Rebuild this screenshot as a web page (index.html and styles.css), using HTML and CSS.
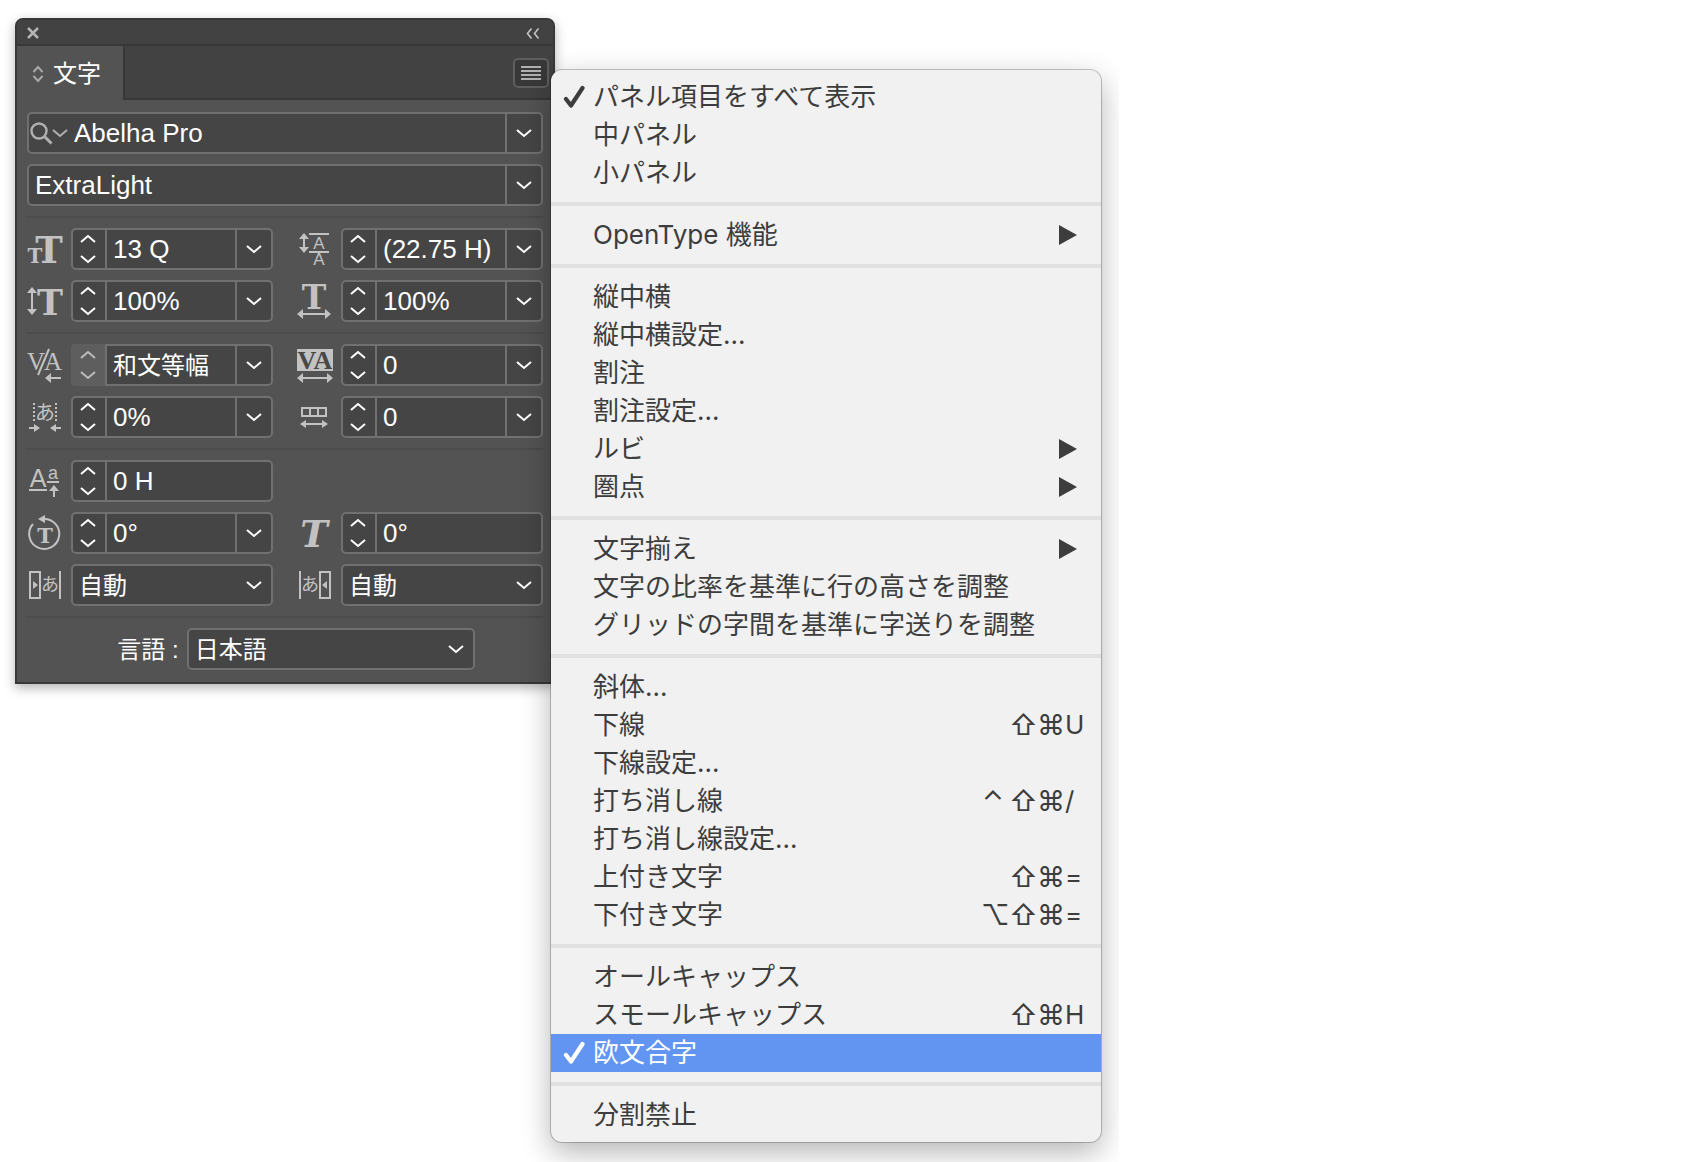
FILE: index.html
```html
<!DOCTYPE html>
<html lang="ja">
<head>
  <meta charset="UTF-8">
  <meta name="viewport" content="width=device-width, initial-scale=1.0">
  <title>文字</title>
  <link rel="stylesheet" href="styles.css">
</head>
<body>
  <svg class="defs" width="0" height="0" aria-hidden="true">
    <symbol id="down" viewBox="0 0 16 9"><path d="M1 1l7 6 7-6" fill="none" stroke="currentColor" stroke-width="2"/></symbol>
    <symbol id="up" viewBox="0 0 16 9"><path d="M1 8l7-6 7 6" fill="none" stroke="currentColor" stroke-width="2"/></symbol>
    <symbol id="check" viewBox="0 0 22 24"><path d="M3 14l5 6.500L19.500 3" fill="none" stroke="currentColor" stroke-width="4.200" stroke-linecap="round" stroke-linejoin="round"/></symbol>
    <symbol id="arrow" viewBox="0 0 18 20"><path d="M0 0l18 10L0 20z" fill="currentColor"/></symbol>
  </svg>

  <main class="stage">
    <section class="panel">
      <header class="titlebar">
        <button class="plain" aria-label="閉じる"><svg width="12" height="12"><path d="M1 1l10 10M11 1L1 11" stroke="#b4b4b4" stroke-width="2.500"/></svg></button>
        <button class="plain" aria-label="折りたたむ"><svg width="14" height="11"><path d="M5.500 .5l-4 5 4 5M12.500 .5l-4 5 4 5" fill="none" stroke="#c4c4c4" stroke-width="1.600"/></svg></button>
      </header>
      <div class="tabs">
        <button class="tab"><svg width="12" height="18"><path d="M1.500 7L6 2l4.500 5M1.500 11L6 16l4.500-5" fill="none" stroke="#a8a8a8" stroke-width="2"/></svg>文字</button>
        <div class="tab-rest">
          <button class="panel-menu" aria-label="パネルメニュー"><svg width="20" height="14"><path d="M0 1h20M0 5h20M0 9h20M0 13h20" stroke="#b0b0b0" stroke-width="2"/></svg></button>
        </div>
      </div>

      <div class="content">
        <div class="field">
          <label class="search" for="family" aria-label="フォントファミリ">
            <svg width="38" height="24"><g fill="none" stroke="#b0b0b0"><circle cx="9" cy="9" r="7.500" stroke-width="2.400"/><path d="M14.500 14.500l7 7" stroke-width="3"/><path d="M23 8l7 6 7-6" stroke-width="2"/></g></svg>
          </label>
          <input id="family" type="text" value="Abelha Pro">
          <button class="drop" aria-label="開く"><svg width="16" height="9"><use href="#down"/></svg></button>
        </div>
        <div class="field">
          <input id="style" type="text" value="ExtraLight" aria-label="フォントスタイル">
          <button class="drop" aria-label="開く"><svg width="16" height="9"><use href="#down"/></svg></button>
        </div>

        <hr>

        <div class="grid">
          <div class="cell">
            <label for="size" aria-label="フォントサイズ"><svg class="icon" width="36" height="42"><text class="slab" x="22" y="35" font-size="37">T</text><text class="slab" x="8" y="35" font-size="20">T</text></svg></label>
            <div class="field">
              <div class="stepper"><button aria-label="増やす"><svg width="16" height="9"><use href="#up"/></svg></button><button aria-label="減らす"><svg width="16" height="9"><use href="#down"/></svg></button></div>
              <input id="size" type="text" value="13 Q">
              <button class="drop" aria-label="開く"><svg width="16" height="9"><use href="#down"/></svg></button>
            </div>
          </div>
          <div class="cell">
            <label for="leading" aria-label="行送り"><svg class="icon" width="36" height="42"><path d="M7 9v11M12 6h20M12 24h20" class="line"/><path d="M7 5l5 6H2zM7 25l5-6H2z"/><text class="sans" x="22" y="21" font-size="17">A</text><text class="sans" x="22" y="37" font-size="17">A</text></svg></label>
            <div class="field">
              <div class="stepper"><button aria-label="増やす"><svg width="16" height="9"><use href="#up"/></svg></button><button aria-label="減らす"><svg width="16" height="9"><use href="#down"/></svg></button></div>
              <input id="leading" type="text" value="(22.75 H)">
              <button class="drop" aria-label="開く"><svg width="16" height="9"><use href="#down"/></svg></button>
            </div>
          </div>
          <div class="cell">
            <label for="vscale" aria-label="垂直比率"><svg class="icon" width="36" height="42"><path d="M5 11v20" class="line"/><path d="M5 7l5 6H0zM5 35l5-6H0z"/><text class="slab" x="23" y="35" font-size="35">T</text></svg></label>
            <div class="field">
              <div class="stepper"><button aria-label="増やす"><svg width="16" height="9"><use href="#up"/></svg></button><button aria-label="減らす"><svg width="16" height="9"><use href="#down"/></svg></button></div>
              <input id="vscale" type="text" value="100%">
              <button class="drop" aria-label="開く"><svg width="16" height="9"><use href="#down"/></svg></button>
            </div>
          </div>
          <div class="cell">
            <label for="hscale" aria-label="水平比率"><svg class="icon" width="36" height="42"><text class="slab" x="17" y="29" font-size="33">T</text><path d="M4 34h26" class="line"/><path d="M0 34l6-5v10zM34 34l-6-5v10z"/></svg></label>
            <div class="field">
              <div class="stepper"><button aria-label="増やす"><svg width="16" height="9"><use href="#up"/></svg></button><button aria-label="減らす"><svg width="16" height="9"><use href="#down"/></svg></button></div>
              <input id="hscale" type="text" value="100%">
              <button class="drop" aria-label="開く"><svg width="16" height="9"><use href="#down"/></svg></button>
            </div>
          </div>
        </div>

        <hr>

        <div class="grid">
          <div class="cell">
            <label for="kerning" aria-label="カーニング"><svg class="icon" width="36" height="42"><text class="serif" x="9" y="26" font-size="25">V</text><text class="serif" x="26" y="26" font-size="25">A</text><path d="M11 31L22 5" class="line"/><path d="M22 34h12" class="line"/><path d="M18 34l6-5v10z"/></svg></label>
            <div class="field">
              <div class="stepper off"><button disabled aria-label="増やす"><svg width="16" height="9"><use href="#up"/></svg></button><button disabled aria-label="減らす"><svg width="16" height="9"><use href="#down"/></svg></button></div>
              <input id="kerning" class="ja" type="text" value="和文等幅">
              <button class="drop" aria-label="開く"><svg width="16" height="9"><use href="#down"/></svg></button>
            </div>
          </div>
          <div class="cell">
            <label for="tracking" aria-label="トラッキング"><svg class="icon" width="36" height="42"><path d="M0 5h36v22H0z"/><text class="serif cut" x="10" y="25" font-size="26">V</text><text class="serif cut" x="26" y="25" font-size="26">A</text><path d="M4 34h28" class="line"/><path d="M0 34l6-5v10zM36 34l-6-5v10z"/></svg></label>
            <div class="field">
              <div class="stepper"><button aria-label="増やす"><svg width="16" height="9"><use href="#up"/></svg></button><button aria-label="減らす"><svg width="16" height="9"><use href="#down"/></svg></button></div>
              <input id="tracking" type="text" value="0">
              <button class="drop" aria-label="開く"><svg width="16" height="9"><use href="#down"/></svg></button>
            </div>
          </div>
          <div class="cell">
            <label for="tsume" aria-label="文字ツメ"><svg class="icon" width="36" height="42"><path d="M7 7v18M29 7v18" class="line" stroke-dasharray="2 2"/><text class="kana" x="18" y="24" font-size="20">あ</text><path d="M2 32h8M26 32h8" class="line"/><path d="M13 32l-6-4v8zM23 32l6-4v8z"/></svg></label>
            <div class="field">
              <div class="stepper"><button aria-label="増やす"><svg width="16" height="9"><use href="#up"/></svg></button><button aria-label="減らす"><svg width="16" height="9"><use href="#down"/></svg></button></div>
              <input id="tsume" type="text" value="0%">
              <button class="drop" aria-label="開く"><svg width="16" height="9"><use href="#down"/></svg></button>
            </div>
          </div>
          <div class="cell">
            <label for="gridtrack" aria-label="グリッドの字間"><svg class="icon" width="36" height="42"><path d="M5 12h24v8H5zM13 12v8M21 12v8" class="line"/><path d="M7 28h20" class="line"/><path d="M3 28l6-4v8zM31 28l-6-4v8z"/></svg></label>
            <div class="field">
              <div class="stepper"><button aria-label="増やす"><svg width="16" height="9"><use href="#up"/></svg></button><button aria-label="減らす"><svg width="16" height="9"><use href="#down"/></svg></button></div>
              <input id="gridtrack" type="text" value="0">
              <button class="drop" aria-label="開く"><svg width="16" height="9"><use href="#down"/></svg></button>
            </div>
          </div>
        </div>

        <hr>

        <div class="grid">
          <div class="cell">
            <label for="baseline" aria-label="ベースラインシフト"><svg class="icon" width="36" height="42"><text class="sans" x="11" y="27" font-size="25">A</text><text class="sans" x="26" y="19" font-size="18">a</text><path d="M2 30h18M20 22h12M27 29v8" class="line"/><path d="M27 25l5 6H22z"/></svg></label>
            <div class="field">
              <div class="stepper"><button aria-label="増やす"><svg width="16" height="9"><use href="#up"/></svg></button><button aria-label="減らす"><svg width="16" height="9"><use href="#down"/></svg></button></div>
              <input id="baseline" type="text" value="0 H">
            </div>
          </div>
          <div class="cell"></div>
          <div class="cell">
            <label for="rotate" aria-label="文字回転"><svg class="icon" width="36" height="42"><path d="M6 12A15 15 0 1 0 16 7" class="line"/><path d="M11 7l7-4v8z"/><text class="slab" x="18" y="31" font-size="21">T</text></svg></label>
            <div class="field">
              <div class="stepper"><button aria-label="増やす"><svg width="16" height="9"><use href="#up"/></svg></button><button aria-label="減らす"><svg width="16" height="9"><use href="#down"/></svg></button></div>
              <input id="rotate" type="text" value="0°">
              <button class="drop" aria-label="開く"><svg width="16" height="9"><use href="#down"/></svg></button>
            </div>
          </div>
          <div class="cell">
            <label for="skew" aria-label="歪み"><svg class="icon" width="36" height="42"><text class="slab oblique" x="17" y="35" font-size="37">T</text></svg></label>
            <div class="field">
              <div class="stepper"><button aria-label="増やす"><svg width="16" height="9"><use href="#up"/></svg></button><button aria-label="減らす"><svg width="16" height="9"><use href="#down"/></svg></button></div>
              <input id="skew" type="text" value="0°">
            </div>
          </div>
          <div class="cell">
            <label for="before" aria-label="文字前のアキ"><svg class="icon" width="36" height="42"><path d="M3 8h10v26H3zM33 7v28" class="line"/><path d="M6 17l5 4-5 4z"/><text class="kana" x="23" y="27" font-size="18">あ</text></svg></label>
            <div class="field select">
              <select id="before"><option>自動</option></select>
              <svg width="16" height="9"><use href="#down"/></svg>
            </div>
          </div>
          <div class="cell">
            <label for="after" aria-label="文字後のアキ"><svg class="icon" width="36" height="42"><path d="M23 8h10v26H23zM3 7v28" class="line"/><path d="M30 17l-5 4 5 4z"/><text class="kana" x="13" y="27" font-size="18">あ</text></svg></label>
            <div class="field select">
              <select id="after"><option>自動</option></select>
              <svg width="16" height="9"><use href="#down"/></svg>
            </div>
          </div>
        </div>

        <hr>

        <div class="language">
          <label for="lang">言語 :</label>
          <div class="field select">
            <select id="lang"><option>日本語</option></select>
            <svg width="16" height="9"><use href="#down"/></svg>
          </div>
        </div>
      </div>
    </section>

    <div class="menu" role="menu">
      <button role="menuitemcheckbox" aria-checked="true"><svg class="check" width="22" height="24"><use href="#check"/></svg>パネル項目をすべて表示</button>
      <button role="menuitem">中パネル</button>
      <button role="menuitem">小パネル</button>
      <hr>
      <button role="menuitem">OpenType 機能<svg class="sub" width="18" height="20"><use href="#arrow"/></svg></button>
      <hr>
      <button role="menuitem">縦中横</button>
      <button role="menuitem">縦中横設定...</button>
      <button role="menuitem">割注</button>
      <button role="menuitem">割注設定...</button>
      <button role="menuitem">ルビ<svg class="sub" width="18" height="20"><use href="#arrow"/></svg></button>
      <button role="menuitem">圏点<svg class="sub" width="18" height="20"><use href="#arrow"/></svg></button>
      <hr>
      <button role="menuitem">文字揃え<svg class="sub" width="18" height="20"><use href="#arrow"/></svg></button>
      <button role="menuitem">文字の比率を基準に行の高さを調整</button>
      <button role="menuitem">グリッドの字間を基準に字送りを調整</button>
      <hr>
      <button role="menuitem">斜体...</button>
      <button role="menuitem">下線<kbd><i>⇧</i><i>⌘</i><b>U</b></kbd></button>
      <button role="menuitem">下線設定...</button>
      <button role="menuitem">打ち消し線<kbd><i>⌃</i><i>⇧</i><i>⌘</i><b>/</b></kbd></button>
      <button role="menuitem">打ち消し線設定...</button>
      <button role="menuitem">上付き文字<kbd><i>⇧</i><i>⌘</i><b>=</b></kbd></button>
      <button role="menuitem">下付き文字<kbd><i>⌥</i><i>⇧</i><i>⌘</i><b>=</b></kbd></button>
      <hr>
      <button role="menuitem">オールキャップス</button>
      <button role="menuitem">スモールキャップス<kbd><i>⇧</i><i>⌘</i><b>H</b></kbd></button>
      <button role="menuitemcheckbox" aria-checked="true" class="selected"><svg class="check" width="22" height="24"><use href="#check"/></svg>欧文合字</button>
      <hr>
      <button role="menuitem">分割禁止</button>
    </div>
  </main>
</body>
</html>
```
FILE: styles.css
```css
* {
  box-sizing: border-box;
}
body {
  margin: 0;
  background: #fff;
  font-family: "Liberation Sans", "Noto Sans CJK JP", sans-serif;
}
.defs {
  position: absolute;
}
button, input, select {
  margin: 0;
  padding: 0;
  border: 0;
  background: none;
  color: inherit;
  font: inherit;
}
svg {
  display: block;
  flex: none;
}
hr {
  margin: 0;
  border: 0;
}
.stage {
  display: inline-flex;
  align-items: flex-start;
  padding: 18px 18px 20px 15px;
  overflow: hidden;
  vertical-align: top;
}

/* panel */
.panel {
  width: 540px;
  border: 2px solid #383838;
  border-radius: 8px 8px 0 0;
  background: #535353;
  color: #fff;
  font-size: 24px;
  box-shadow: 0 4px 12px rgba(0,0,0,0.3);
}
.titlebar {
  display: flex;
  justify-content: space-between;
  align-items: center;
  padding: 4px 13px 2px 10px;
  border-bottom: 2px solid #383838;
  border-radius: 6px 6px 0 0;
  background: #424242;
  height: 26px;
}
.tabs {
  display: flex;
  height: 54px;
}
.tab {
  display: flex;
  align-items: center;
  gap: 9px;
  padding: 0 22px 4px 15px;
  border-right: 2px solid #383838;
}
.tab svg {
  margin-top: 6px;
}
.tab-rest {
  flex: 1;
  display: flex;
  justify-content: flex-end;
  align-items: center;
  padding: 2px 4px 0 0;
  border-bottom: 2px solid #383838;
  background: #424242;
}
.panel-menu {
  display: grid;
  place-items: center;
  width: 36px;
  height: 30px;
  border: 2px solid #5e5e5e;
  border-radius: 5px;
  background: #383838;
}
.content {
  display: flex;
  flex-direction: column;
  gap: 10px;
  padding: 12px 10px;
}
.content hr {
  height: 2px;
  background: #4b4b4b;
}
.grid {
  display: grid;
  grid-template-columns: repeat(2, minmax(0, 1fr));
  gap: 10px 24px;
}
.cell {
  display: flex;
  gap: 8px;
}
.field {
  flex: 1;
  display: flex;
  min-width: 0;
  height: 42px;
  border: 2px solid #707070;
  border-radius: 5px;
  background: #454545;
}
.content > .field {
  flex: none;
}
.field input {
  flex: 1;
  width: 100%;
  min-width: 0;
  padding: 1px 0 0 6px;
  font-size: 26px;
}
.field input.ja {
  padding: 0 0 3px 6px;
  font-size: 24px;
}
.search {
  padding: 8px 0 0 1px;
}
.stepper {
  flex: none;
  width: 34px;
  display: flex;
  flex-direction: column;
  justify-content: space-between;
  padding: 4px 2px 4px 0;
  border-right: 2px solid #707070;
}
.stepper button {
  display: grid;
  place-items: center;
}
.stepper.off {
  width: 36px;
  margin: -2px 0 -2px -2px;
  padding: 6px 2px 6px 2px;
  border-radius: 5px 0 0 5px;
  background: #5e5e5e;
  color: #bcbcbc;
}
.drop {
  flex: none;
  display: grid;
  place-items: center;
  width: 36px;
  border-left: 2px solid #707070;
}
.select {
  display: grid;
  align-items: center;
}
.select select {
  grid-area: 1 / 1;
  height: 38px;
  padding-left: 6px;
  appearance: none;
}
.select svg {
  grid-area: 1 / 1;
  justify-self: end;
  margin-right: 9px;
  pointer-events: none;
}
.language {
  display: flex;
  justify-content: center;
  align-items: center;
  gap: 8px;
  padding-left: 22px;
}
.language label {
  padding-bottom: 3px;
}
.language .field {
  flex: none;
  width: 288px;
}

/* field icons */
.icon {
  fill: #c2c2c2;
  text-anchor: middle;
}
.icon .line {
  fill: none;
  stroke: #c2c2c2;
  stroke-width: 2;
}
.slab {
  font-family: "DejaVu Serif", serif;
  font-weight: bold;
}
.oblique {
  font-style: italic;
}
.serif {
  font-family: "Liberation Serif", serif;
}
.cut {
  fill: #484848;
  font-weight: bold;
}
.sans {
  font-family: "Liberation Sans", sans-serif;
}
.kana {
  font-family: "Noto Sans CJK JP", sans-serif;
}

/* flyout menu */
.menu {
  width: 550px;
  margin: 52px 0 0 -4px;
  padding: 8px 0;
  border-radius: 11px;
  background: #f1f1f1;
  color: #3d3d3d;
  font-family: Inter, "Noto Sans CJK JP", sans-serif;
  font-size: 26px;
  box-shadow: 0 0 0 1px rgba(0,0,0,0.22), 0 10px 30px rgba(0,0,0,0.3);
  z-index: 1;
}
.menu button {
  display: flex;
  align-items: center;
  width: 100%;
  height: 38px;
  padding-left: 42px;
  line-height: 38px;
  white-space: pre;
}
.menu hr {
  height: 4px;
  margin: 10px 0;
  background: #e0e0e0;
}
.menu .selected {
  background: #6195f1;
  color: #fff;
}
.check {
  margin: 0 8px 0 -30px;
}
.sub {
  margin: 0 24px 0 auto;
}
kbd {
  display: flex;
  margin-left: auto;
  padding-right: 12px;
  font-family: Inter, "DejaVu Sans", sans-serif;
}
kbd i {
  width: 28px;
  padding-right: 4px;
  font-size: 28px;
  font-style: normal;
  text-align: center;
}
kbd b {
  width: 24px;
  font-weight: normal;
  text-align: left;
}
```
